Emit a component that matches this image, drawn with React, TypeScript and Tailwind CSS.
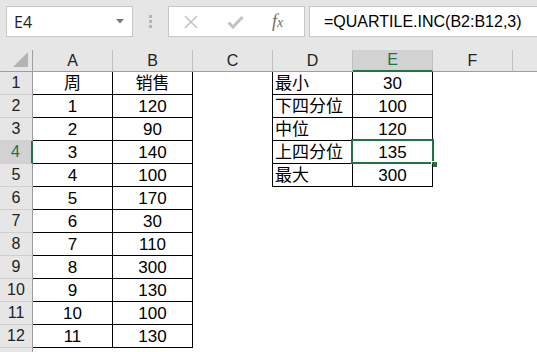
import React from 'react';

const COLS = ['A', 'B', 'C', 'D', 'E', 'F', ''];

const weeks = [
  ['周', '销售'],
  ['1', '120'],
  ['2', '90'],
  ['3', '140'],
  ['4', '100'],
  ['5', '170'],
  ['6', '30'],
  ['7', '110'],
  ['8', '300'],
  ['9', '130'],
  ['10', '100'],
  ['11', '130'],
];

const stats = [
  ['最小', '30'],
  ['下四分位', '100'],
  ['中位', '120'],
  ['上四分位', '135'],
  ['最大', '300'],
];

const cellFont = { fontFamily: '"Liberation Sans", "Noto Sans CJK SC", sans-serif' };

function Cell({ row, col }: { row: number; col: number }) {
  // col index: 0 = A ... 6 = G
  let text = '';
  let align = 'justify-center';
  const inA = row >= 1 && row <= 12 && col <= 1;
  const inD = row >= 1 && row <= 5 && (col === 3 || col === 4);
  if (inA) text = weeks[row - 1][col];
  if (inD) {
    text = stats[row - 1][col - 3];
    if (col === 3) align = 'justify-start pl-[2px]';
  }
  const boxed = inA || inD;
  const rightBlack = boxed || (col === 2 && row >= 1 && row <= 5);
  const selected = row === 4 && col === 4;

  return (
    <div
      className={`relative flex h-[23px] w-[80px] shrink-0 items-center text-[17px] leading-none text-black ${align} ${
        rightBlack ? 'border-r border-black' : ''
      } ${boxed ? 'border-b border-black' : ''}`}
      style={cellFont}
    >
      {text}
      {selected && (
        <>
          <div className="absolute -left-[2px] -top-[2px] h-[25px] w-[83px] border-2 border-[#217346]" />
          <div className="absolute -right-[5px] -bottom-[4px] h-[6px] w-[6px] border-l border-t border-white bg-[#217346]" />
        </>
      )}
    </div>
  );
}

function FormulaBar() {
  return (
    <div className="flex h-[50px] items-start bg-[#e6e6e6] pt-[6px]">
      <div className="ml-[6px] flex h-[31px] w-[127px] items-center justify-between border border-[#c6c6c6] bg-white pl-[7px] pr-[8px]">
        <span className="text-[16px] text-[#222]" style={{ fontFamily: '"Open Sans", sans-serif' }}>
          E4
        </span>
        <svg width="8" height="5" viewBox="0 0 8 5">
          <path d="M0 0h8L4 4.5z" fill="#777" />
        </svg>
      </div>
      <div className="ml-[16px] mt-[9px] flex flex-col gap-[2px]">
        <div className="h-[3px] w-[3px] bg-[#b5b5b5]" />
        <div className="h-[3px] w-[3px] bg-[#b5b5b5]" />
        <div className="h-[3px] w-[3px] bg-[#b5b5b5]" />
      </div>
      <div className="ml-[16px] flex h-[31px] w-[137px] items-center border border-[#c6c6c6] bg-white">
        <svg className="ml-[15px]" width="14" height="14" viewBox="0 0 14 14">
          <path d="M1 1L13 13M13 1L1 13" stroke="#c3c3c3" strokeWidth="1.6" />
        </svg>
        <svg className="ml-[29px]" width="17" height="14" viewBox="0 0 17 14">
          <path d="M1.5 7.5L6 12L15.5 2" stroke="#c3c3c3" strokeWidth="3" fill="none" />
        </svg>
        <span
          className="ml-[28px] text-[18px] italic text-[#6e6e6e]"
          style={{ fontFamily: '"Liberation Serif", serif' }}
        >
          f<span className="text-[14px]">x</span>
        </span>
      </div>
      <div className="ml-[4px] flex h-[31px] flex-1 items-center border border-r-0 border-[#c6c6c6] bg-white pl-[14px]">
        <span className="text-[16px] text-black" style={{ fontFamily: '"Liberation Sans", sans-serif' }}>
          =QUARTILE.INC(B2:B12,3)
        </span>
      </div>
    </div>
  );
}

export default function App() {
  const rows = Array.from({ length: 13 }, (_, i) => i + 1);
  const headerFont = { fontFamily: '"Liberation Sans", sans-serif' };

  return (
    <div className="h-[352px] w-[537px] overflow-hidden bg-white">
      <FormulaBar />
      <div className="flex h-[22px] bg-[#e6e6e6]">
        <div className="relative h-[22px] w-[33px] shrink-0 border-b border-r border-[#9e9e9e]">
          <svg className="absolute bottom-[4px] right-[4px]" width="15" height="15" viewBox="0 0 15 15">
            <path d="M15 0V15H0z" fill="#b4b4b4" />
          </svg>
        </div>
        {COLS.map((c, i) => {
          const sel = c === 'E';
          return (
            <div
              key={i}
              className={`flex h-[22px] w-[80px] shrink-0 items-center justify-center border-r text-[16px] ${
                sel
                  ? 'border-b-2 border-r-[#bfbfbf] border-b-[#217346] bg-[#d2d2d2] text-[#217346]'
                  : 'border-b border-r-[#bfbfbf] border-b-[#9e9e9e] text-[#222]'
              }`}
              style={headerFont}
            >
              {c}
            </div>
          );
        })}
      </div>
      {rows.map((r) => {
        const sel = r === 4;
        return (
          <div key={r} className="flex h-[23px]">
            <div
              className={`flex h-[23px] w-[33px] shrink-0 items-center justify-center border-b border-b-[#cfcfcf] text-[16px] ${
                sel
                  ? 'border-r-2 border-r-[#217346] bg-[#d2d2d2] text-[#217346]'
                  : 'border-r border-r-[#9e9e9e] bg-[#e6e6e6] text-[#222]'
              }`}
              style={headerFont}
            >
              {r <= 12 ? r : ''}
            </div>
            {COLS.map((_, ci) => (
              <Cell key={ci} row={r} col={ci} />
            ))}
          </div>
        );
      })}
    </div>
  );
}
